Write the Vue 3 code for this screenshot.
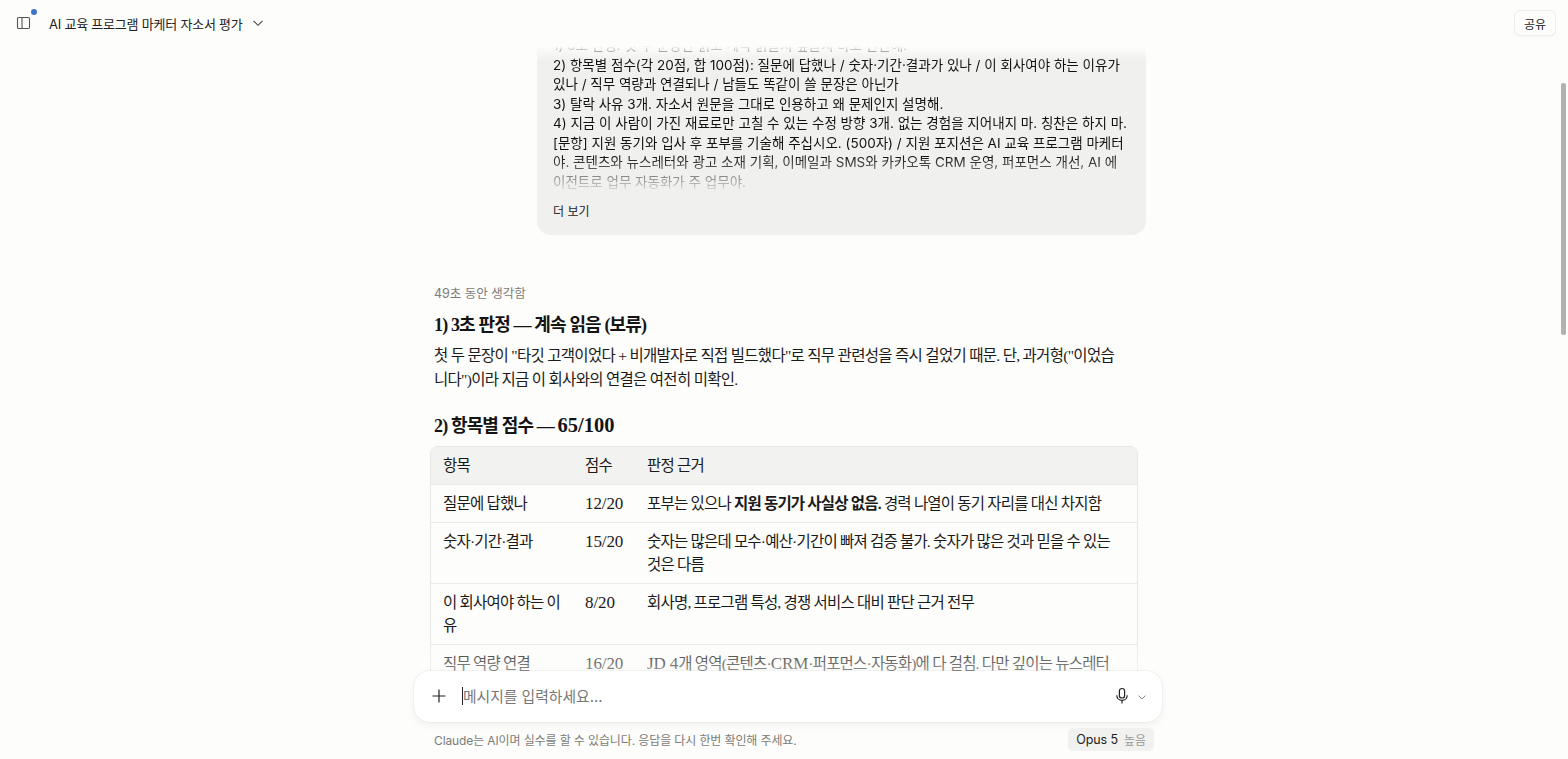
<script setup>
const rows = [
  { item: '질문에 답했나', score: '12/20', parts: [['포부는 있으나 ', ''], ['지원 동기가 사실상 없음.', 'b'], [' 경력 나열이 동기 자리를 대신 차지함', '']] },
  { item: '숫자·기간·결과', score: '15/20', parts: [['숫자는 많은데 모수·예산·기간이 빠져 검증 불가. 숫자가 많은 것과 믿을 수 있는 것은 다름', '']] },
  { item: '이 회사여야 하는 이유', score: '8/20', parts: [['회사명, 프로그램 특성, 경쟁 서비스 대비 판단 근거 전무', '']] },
  { item: '직무 역량 연결', score: '16/20', parts: [['JD 4', 'l'], ['개 영역(콘텐츠·', ''], ['CRM', 'l'], ['·퍼포먼스·자동화)에 다 걸침. 다만 깊이는 뉴스레터', '']] }
]
</script>

<template>
  <div class="app">
    <header class="top">
      <div class="top-left">
        <div class="side-btn">
          <svg width="16" height="16" viewBox="0 0 16 16" fill="none" stroke="#555" stroke-width="1.1">
            <rect x="2.5" y="2.5" width="12" height="11" rx="1.2" />
            <path d="M7 2.5v11" />
          </svg>
          <span class="dot"></span>
        </div>
        <span class="title">AI 교육 프로그램 마케터 자소서 평가</span>
        <svg class="caret" width="12" height="12" viewBox="0 0 12 12" fill="none" stroke="#444" stroke-width="1.1">
          <path d="M1.5 3.8 6 8.3l4.5-4.5" />
        </svg>
      </div>
      <button class="share">공유</button>
    </header>

    <main class="scroll">
      <div class="thread">
        <section class="bubble">
          <div class="bubble-text">
            <p>1) 3초 판정. 첫 두 문장만 읽고 계속 읽을지 덮을지 바로 판단해.</p>
            <p>2) 항목별 점수(각 20점, 합 100점): 질문에 답했나 / 숫자·기간·결과가 있나 / 이 회사여야 하는 이유가 있나 / 직무 역량과 연결되나 / 남들도 똑같이 쓸 문장은 아닌가</p>
            <p>3) 탈락 사유 3개. 자소서 원문을 그대로 인용하고 왜 문제인지 설명해.</p>
            <p>4) 지금 이 사람이 가진 재료로만 고칠 수 있는 수정 방향 3개. 없는 경험을 지어내지 마. 칭찬은 하지 마.</p>
            <p>[문항] 지원 동기와 입사 후 포부를 기술해 주십시오. (500자) / 지원 포지션은 AI 교육 프로그램 마케터야. 콘텐츠와 뉴스레터와 광고 소재 기획, 이메일과 SMS와 카카오톡 CRM 운영, 퍼포먼스 개선, AI 에이전트로 업무 자동화가 주 업무야.</p>
          </div>
          <div class="more">더 보기</div>
        </section>

        <section class="answer">
          <div class="thought">49초 동안 생각함</div>
          <h2 class="h-first">1) 3초 판정 — 계속 읽음 (보류)</h2>
          <p class="para">첫 두 문장이 "타깃 고객이었다 + 비개발자로 직접 빌드했다"로 직무 관련성을 즉시 걸었기 때문. 단, 과거형("이었습니다")이라 지금 이 회사와의 연결은 여전히 미확인.</p>
          <h2 class="h-second">2) 항목별 점수 — <span class="num">65/100</span></h2>
          <div class="table-wrap">
            <table>
              <colgroup>
                <col class="c1" />
                <col class="c2" />
                <col />
              </colgroup>
              <thead>
                <tr><th>항목</th><th>점수</th><th>판정 근거</th></tr>
              </thead>
              <tbody>
                <tr v-for="r in rows" :key="r.item">
                  <td class="item">{{ r.item }}</td>
                  <td class="score">{{ r.score }}</td>
                  <td>
                    <template v-for="(p, i) in r.parts" :key="i">
                      <strong v-if="p[1] === 'b'">{{ p[0] }}</strong>
                      <span v-else-if="p[1] === 'l'" class="latin">{{ p[0] }}</span>
                      <template v-else>{{ p[0] }}</template>
                    </template>
                  </td>
                </tr>
              </tbody>
            </table>
          </div>
        </section>
      </div>
    </main>

    <div class="top-fade"></div>
    <div class="scrollbar"></div>

    <div class="bottom">
      <div class="composer">
        <svg class="plus" width="16" height="16" viewBox="0 0 16 16" fill="none" stroke="#222" stroke-width="1.2">
          <path d="M8 1.5v13M1.5 8h13" />
        </svg>
        <div class="input"><span class="cursor"></span>메시지를 입력하세요...</div>
        <svg class="mic" width="16" height="18" viewBox="0 0 16 18" fill="none" stroke="#222" stroke-width="1.2">
          <rect x="5.4" y="1.5" width="5.2" height="9.5" rx="2.6" />
          <path d="M2.8 8.2c0 3 2.2 5.2 5.2 5.2s5.2-2.2 5.2-5.2M8 13.4v3" />
        </svg>
        <svg class="mic-caret" width="10" height="10" viewBox="0 0 10 10" fill="none" stroke="#888" stroke-width="1">
          <path d="M1.5 3.5 5 7l3.5-3.5" />
        </svg>
      </div>
      <div class="foot">
        <span class="disclaimer">Claude는 AI이며 실수를 할 수 있습니다. 응답을 다시 한번 확인해 주세요.</span>
        <span class="model"><b>Opus 5</b><i>높음</i></span>
      </div>
    </div>
  </div>
</template>

<style>
html, body { margin: 0; background: #fdfdfb; }
</style>

<style scoped>
.app {
  position: relative;
  height: 759px;
  overflow: hidden;
  background: #fdfdfb;
  color: #1a1a1a;
  font-family: Inter, "Noto Sans CJK KR", sans-serif;
  display: flex;
  flex-direction: column;
}
.top {
  position: relative;
  z-index: 3;
  height: 46px;
  flex: none;
  display: flex;
  align-items: center;
  justify-content: space-between;
  padding: 0 12px 0 15px;
  background: #fdfdfb;
}
.top-left { display: flex; align-items: center; }
.side-btn { position: relative; width: 16px; height: 16px; margin-right: 18px; }
.side-btn svg { display: block; }
.dot {
  position: absolute;
  left: 16px;
  top: -6px;
  width: 6px;
  height: 6px;
  border-radius: 50%;
  background: #3f74c4;
}
.title { font-size: 13px; letter-spacing: -.22px; color: #222; }
.caret { margin-left: 9px; }
.share {
  font: inherit;
  font-size: 12px;
  color: #222;
  width: 42px;
  height: 26px;
  padding: 0;
  background: #fdfdfb;
  border: 1px solid #eeeeec;
  border-radius: 6px;
  box-shadow: 0 1px 2px rgba(0, 0, 0, .04);
}
.top-fade {
  position: absolute;
  z-index: 2;
  left: 0;
  right: 10px;
  top: 46px;
  height: 15px;
  background: linear-gradient(#fdfdfb, rgba(253, 253, 251, 0));
}
.scroll { flex: 1; overflow: hidden; min-height: 0; }
.thread {
  width: 708px;
  margin: -211px 0 0 430px;
}
.bubble {
  margin: 0 -8px 0 107px;
  width: 609px;
  box-sizing: border-box;
  height: 400px;
  padding: 0 18px 0 16px;
  background: #f0f0ee;
  border-radius: 14px;
  display: flex;
  flex-direction: column;
  justify-content: flex-end;
}
.bubble-text {
  font-size: 13.5px;
  line-height: 19.5px;
  color: #111;
  -webkit-mask-image: linear-gradient(#000 0, #000 calc(100% - 36px), rgba(0,0,0,.05) 100%);
  mask-image: linear-gradient(#000 0, #000 calc(100% - 36px), rgba(0,0,0,.05) 100%);
}
.bubble-text p { margin: 0; }
.more { font-size: 12px; line-height: 18px; margin: 11px 0 14px; color: #222; }
.answer { padding-left: 4px; }
.thought { margin-top: 50px; font-size: 12.5px; line-height: 18px; color: #7c7c78; }
h2 {
  font-family: "Liberation Serif", "Noto Sans CJK KR", serif;
  font-size: 18px;
  font-weight: 700;
  letter-spacing: -.85px;
  margin: 0;
  color: #141414;
}
.num { font-size: 20.5px; letter-spacing: 0; }
.h-first { margin-top: 9px; line-height: 26px; }
.para {
  font-family: "Liberation Serif", "Noto Sans CJK KR", serif;
  font-size: 15.5px;
  letter-spacing: -.7px;
  line-height: 23.5px;
  margin: 6px 0 0;
  max-width: 690px;
  color: #1a1a1a;
}
.h-second { margin-top: 21px; line-height: 26px; }
.table-wrap {
  margin: 7px 0 0 -4px;
  border: 1px solid #e8e8e5;
  border-radius: 8px;
  overflow: hidden;
  width: 706px;
}
table {
  width: 100%;
  border-collapse: collapse;
  table-layout: fixed;
  font-family: "Liberation Serif", "Noto Sans CJK KR", serif;
  font-size: 15.5px;
  letter-spacing: -.8px;
  line-height: 23px;
  color: #1a1a1a;
}
.c1 { width: 142px; }
.c2 { width: 62px; }
th, td { padding: 7px 12px; text-align: left; vertical-align: top; font-weight: 400; }
th { background: #f2f2f0; }
td.item { padding-right: 10px; }
td.score { font-size: 17px; letter-spacing: -.1px; }
.latin { font-size: 17px; letter-spacing: -.1px; }
tbody tr td { border-top: 1px solid #eaeae7; }
td strong { font-weight: 700; }
.scrollbar {
  position: absolute;
  z-index: 2;
  right: 2px;
  top: 83px;
  width: 5px;
  height: 252px;
  border-radius: 2px;
  background: #b1b1b1;
}
.bottom {
  position: absolute;
  z-index: 3;
  left: 0;
  right: 0;
  bottom: 0;
  height: 120px;
  background: linear-gradient(rgba(253,253,251,0) 0, rgba(253,253,251,.5) 32px, rgba(253,253,251,.6) 56px, #fdfdfb 57px);
}
.composer {
  width: 748px;
  height: 51px;
  margin: 32px 0 0 414px;
  box-sizing: border-box;
  background: #fff;
  border-radius: 16px;
  box-shadow: 0 0 0 1px rgba(0,0,0,.035), 0 3px 10px rgba(0,0,0,.05);
  display: flex;
  align-items: center;
  padding: 0 15px 0 17px;
}
.plus { flex: none; margin-top: -1px; }
.input {
  flex: 1;
  display: flex;
  align-items: center;
  margin-left: 15px;
  margin-top: -2px;
  font-size: 14.8px;
  color: #777;
}
.cursor { width: 1px; height: 18px; background: #222; margin-right: 0; }
.mic { flex: none; margin-right: 7px; margin-top: -1px; }
.mic-caret { flex: none; }
.foot {
  width: 720px;
  margin: 6px 0 0 434px;
  display: flex;
  align-items: center;
  justify-content: space-between;
}
.disclaimer { font-size: 12px; letter-spacing: -.12px; color: #7c7c78; }
.model {
  display: flex;
  gap: 6px;
  align-items: center;
  height: 23px;
  padding: 0 8px;
  border-radius: 5px;
  background: #f1f1ef;
  font-size: 12.5px;
}
.model b { font-weight: 400; letter-spacing: -.1px; color: #222; }
.model i { font-style: normal; font-size: 12px; color: #999; }
</style>
